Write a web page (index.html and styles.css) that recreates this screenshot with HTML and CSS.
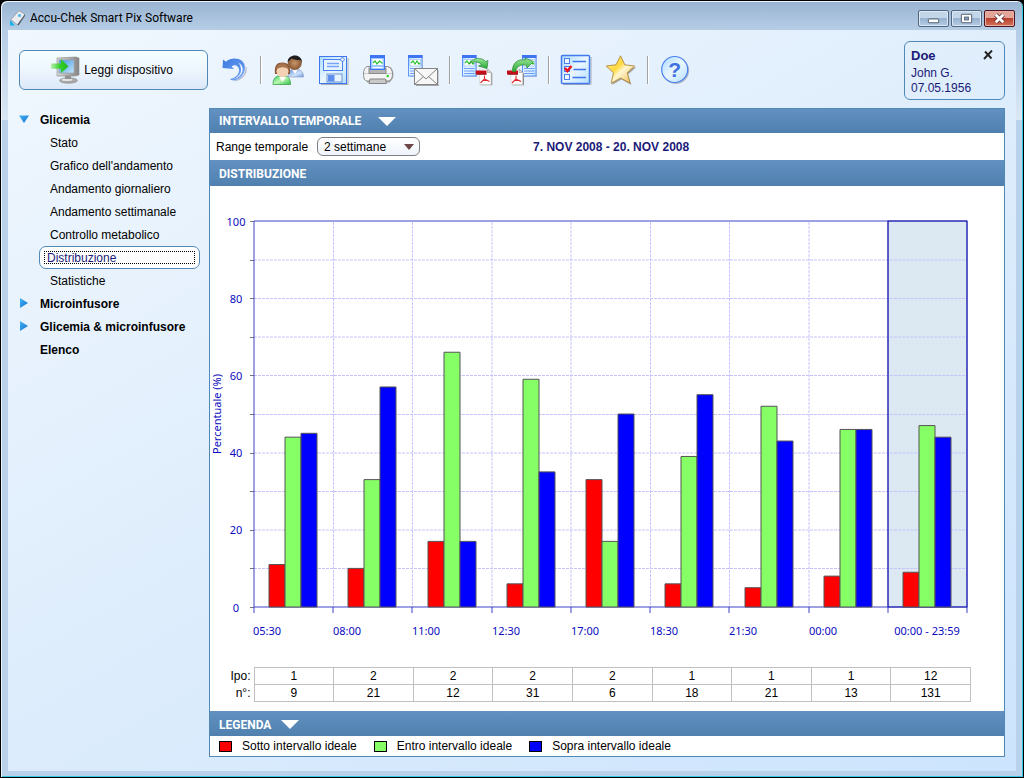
FILE: index.html
```html
<!DOCTYPE html>
<html lang="it">
<head>
<meta charset="utf-8">
<meta name="viewport" content="width=device-width, initial-scale=1">
<title>Accu-Chek Smart Pix Software</title>
<link rel="stylesheet" href="styles.css">
</head>
<body>
<svg class="defs" aria-hidden="true">
  <defs>
    <linearGradient id="paper" x1="0" y1="0" x2="1" y2="1"><stop offset="0" stop-color="#a8dcff"/><stop offset=".5" stop-color="#eaf6ff"/><stop offset="1" stop-color="#b4e0ff"/></linearGradient>
    <linearGradient id="gold" x1="0" y1="0" x2="1" y2="1"><stop offset="0" stop-color="#fff3b0"/><stop offset=".4" stop-color="#ffd93a"/><stop offset=".55" stop-color="#fff6d0"/><stop offset="1" stop-color="#f0b84a"/></linearGradient>
    <linearGradient id="leaf" x1="0" y1="0" x2="0" y2="1"><stop offset="0" stop-color="#9be69b"/><stop offset="1" stop-color="#27a82f"/></linearGradient>
    <linearGradient id="swirl" x1="0" y1="0" x2="1" y2="1"><stop offset="0" stop-color="#3f7be0"/><stop offset=".6" stop-color="#5b92ee"/><stop offset="1" stop-color="#8fb4f6"/></linearGradient>
    <linearGradient id="steel" x1="0" y1="0" x2="1" y2="0"><stop offset="0" stop-color="#d8d8d8"/><stop offset="1" stop-color="#858585"/></linearGradient>
    <linearGradient id="screen" x1="0" y1="0" x2="1" y2="1"><stop offset="0" stop-color="#3f96e0"/><stop offset="1" stop-color="#c4e6ff"/></linearGradient>
    <linearGradient id="go" x1="0" y1="0" x2="1" y2="0"><stop offset="0" stop-color="#b8f0b0"/><stop offset=".5" stop-color="#35d02c"/><stop offset="1" stop-color="#20b81c"/></linearGradient>
    <linearGradient id="green-coat" x1="0" y1="0" x2="1" y2="1"><stop offset="0" stop-color="#3ec95a"/><stop offset=".5" stop-color="#b8f8b0"/><stop offset="1" stop-color="#34c04a"/></linearGradient>
    <linearGradient id="blue-coat" x1="0" y1="0" x2="1" y2="1"><stop offset="0" stop-color="#5c8cd8"/><stop offset=".6" stop-color="#cfe2fb"/><stop offset="1" stop-color="#6b98de"/></linearGradient>
    <radialGradient id="dark-skin"><stop offset="0" stop-color="#c79468"/><stop offset="1" stop-color="#8a5a36"/></radialGradient>
    <linearGradient id="arrow-blue" x1="0" y1="0" x2="1" y2="1"><stop offset="0" stop-color="#45b4f4"/><stop offset="1" stop-color="#0f6fd0"/></linearGradient>
    <symbol id="report" viewBox="0 0 15 22">
      <path d="M15 2v20H2" fill="none" stroke="#a9adb5"/>
      <rect x=".5" y=".5" width="13.5" height="20.5" fill="url(#paper)" stroke="#5d92fb"/>
      <rect width="14.500" height="3" fill="#3e74f4"/>
      <rect x="2" y="4.500" width="10.500" height="6.500" fill="#fff" stroke="#8fb6f2" stroke-width=".6"/>
      <path d="M3 8l2-2 2 3 2-3 2 3 1-1" fill="none" stroke="#28c02c" stroke-width="1.200"/>
      <path d="M2 13.500h10.500M2 16h10.500M2 18.500h10.500" stroke="#6f9cf8"/>
    </symbol>
    <symbol id="pdf" viewBox="0 0 17 17">
      <path d="M5 1h8l4 4v12H5z" fill="#8d8d8d"/>
      <path d="M4 .5h8l3.500 3.500v12H4z" fill="#fff" stroke="#d4d4d4" stroke-width=".7"/>
      <path d="M12 .5v3.500h3.500z" fill="#ddd" stroke="#999" stroke-width=".6"/>
      <rect y="2" width="11" height="4" fill="#c4101a"/><path d="M1 5.700h10" stroke="#8d0a10" stroke-width=".8"/>
      <path d="M9 7v3.500l-4 4M9 10.500l5 2.500M7 12h5" fill="none" stroke="#e02830" stroke-width="1.100"/>
    </symbol>
  </defs>
</svg>

<div class="window">
  <header class="titlebar">
    <svg class="app-icon" viewBox="0 0 16 16" aria-hidden="true"><path d="M1 9.500L9 .7l6 3.600-7.500 10.500z" fill="#e8ecef" stroke="#8a939b" stroke-width=".7"/><path d="M7.500 14.800L15 4.300v1.500L8.500 15.500z" fill="#4b5258"/><circle cx="9.500" cy="5.500" r="1.500" fill="#49b4ee"/><path d="M0 10v5.500h5z" fill="#18b0e8"/><path d="M3 9l3.500 3" stroke="#fff"/></svg>
    <h1 class="title">Accu-Chek Smart Pix Software</h1>
    <div class="window-buttons">
      <button class="wbtn" type="button" aria-label="Riduci a icona"><svg viewBox="0 0 30 16"><rect x="9.500" y="8.500" width="11" height="4" rx=".5" fill="#fff" stroke="#4c5a6c"/></svg></button>
      <button class="wbtn" type="button" aria-label="Ingrandisci"><svg viewBox="0 0 30 16"><rect x="9.500" y="3.500" width="11" height="9" rx=".5" fill="#fff" stroke="#4c5a6c"/><rect x="13" y="6.500" width="4" height="3" fill="#8fa9c6" stroke="#4c5a6c"/></svg></button>
      <button class="wbtn wbtn-close" type="button" aria-label="Chiudi"><svg viewBox="0 0 30 16"><path d="M11 4l8 8M19 4l-8 8" stroke="#5a3438" stroke-width="4.800"/><path d="M11 4l8 8M19 4l-8 8" stroke="#fff" stroke-width="3"/></svg></button>
    </div>
  </header>

  <div class="content">
    <div class="toolbar">
      <button class="read" type="button">
        <svg class="read-icon" viewBox="0 0 30 28" aria-hidden="true">
          <ellipse cx="18.500" cy="24.500" rx="9" ry="2.800" fill="#a8a8a8" stroke="#8a8a8a" stroke-width=".6"/><ellipse cx="17" cy="23.700" rx="5.500" ry="1.300" fill="#e4e4e4"/>
          <path d="M15 18h6v5h-6z" fill="#929292"/>
          <path d="M7 2l19-1 3 1v17l-4 1H7z" fill="url(#steel)" stroke="#8a8a8a" stroke-width=".6"/>
          <path d="M9 4h15v13H9z" fill="url(#screen)" stroke="#9ba5ad" stroke-width=".7"/>
          <path d="M1 7.500h10V3l7.500 7.500L11 17v-4.200H1z" fill="url(#go)"/>
        </svg>
        <span>Leggi dispositivo</span>
      </button>
      <div class="tools">
        <button class="tool" type="button" aria-label="Indietro"><svg viewBox="0 0 32 32"><path d="M17 27c8-2 12-8 11-14" fill="none" stroke="#b4b8c4" stroke-width="1.200"/><path d="M5 5.500l3 2.300C14 2 27.300 4 27 14c-.3 7-6 12.500-11.500 12.500-2 0-3-.8-3.500-1.500 6-1 9.500-5.500 9-9.500-.5-3.800-4-5.500-7.500-3l2.500 2.500L4.500 14z" fill="url(#swirl)"/><path d="M20.500 8.500c4.500 3 5 7 3 11-2 3.500-5.500 5.500-9 6 6-2 9-6 8.500-10.500-.2-2.500-1.200-4.500-2.500-6.500z" fill="#f4f8ff"/></svg></button>
      </div>
      <span class="sep"></span>
      <div class="tools">
        <button class="tool" type="button" aria-label="Pazienti"><svg viewBox="0 0 32 32"><path d="M16 23c0-6 3-8 7.500-8s8 2 8 8z" fill="url(#blue-coat)" stroke="#8a9cb8" stroke-width=".6"/><path d="M20 15l3 5 3-5z" fill="#fff"/><circle cx="22.700" cy="9" r="6.700" fill="url(#dark-skin)" stroke="#6f4526" stroke-width=".5"/><path d="M15.800 8C15 0 30.500-1.500 30 9l-1.500-3c-4 .5-7-1-9-1.500z" fill="#221e1e"/><path d="M1 30.500c0-7 3.500-9 9-9s8.500 2 8.500 9z" fill="url(#green-coat)" stroke="#2b9a3c" stroke-width=".7"/><path d="M3 20C2 11 5 8.500 10.500 8.500S19 12 18 20z" fill="#8a5635"/><ellipse cx="10.500" cy="17.300" rx="6" ry="6" fill="#f3d2b4"/><path d="M4 16c0-9 12.500-9 13 0-2-3-9-4.500-13 0z" fill="#a8744d"/><path d="M7 23l3.500 5 3.500-5z" fill="#fff"/></svg></button>
        <button class="tool" type="button" aria-label="Salva"><svg viewBox="0 0 32 32"><path d="M4 30.500h27V4" fill="none" stroke="#a9adb5"/><rect x="2.500" y="2.500" width="27" height="27" fill="url(#paper)" stroke="#3f76ee"/><rect x="6.500" y="5.500" width="19" height="11" fill="#e6f4ff" stroke="#4a80f0"/><path d="M10 9.500h12M10 12.500h12" stroke="#7aa2f8" stroke-width="1.500"/><circle cx="25.500" cy="5.500" r="1.800" fill="#fff" stroke="#4a80f0"/><rect x="10" y="20" width="15" height="8" fill="#e8f4ff" stroke="#6c94d0"/><rect x="11" y="21" width="6.500" height="6.500" fill="#5f90f0"/></svg></button>
        <button class="tool" type="button" aria-label="Stampa"><svg viewBox="0 0 32 32"><path d="M5 12.500h22c3 1 4.500 4 4.500 8 0 3-1 5.500-4 8H5z" fill="#aaa"/><path d="M5 12.500h20.500c3.500 1 5 4 5 7.500s-1.500 7-4.500 7H5c-2.500 0-3.500-3-3.500-7S3 13.500 5 12.500z" fill="#f4f4f4" stroke="#8c8c8c"/><path d="M2 19.500h28" stroke="#cfcfcf"/><rect x="7" y="14" width="17" height="5.500" fill="#b4b4b4" stroke="#8c8c8c"/><rect x="8.500" y="1.500" width="14" height="14" fill="#9cc8ff" stroke="#3e74f4"/><path d="M8 2.500h15" stroke="#3e74f4" stroke-width="3"/><rect x="10.500" y="5" width="10" height="6" fill="#fff"/><path d="M11 9l2-2 2 3 2.500-3 3 2.500" fill="none" stroke="#28c02c" stroke-width="1.200"/><path d="M10.500 13.500h10" stroke="#fff"/><path d="M8 25h15.500l1 4.500H7z" fill="#c9c9c9" stroke="#858585"/><circle cx="25.700" cy="22" r="1.300" fill="#2ed42e"/></svg></button>
        <button class="tool" type="button" aria-label="Invia e-mail"><svg viewBox="0 0 32 32"><use href="#report" x="1" y="1" width="15" height="22"/><path d="M9 31.500h23V16" fill="none" stroke="#a8a8a8"/><rect x="7.500" y="14.500" width="23" height="16" fill="#f7f7f7" stroke="#858585"/><path d="M7.500 30.500l9-8M30.500 30.500l-9-8M7.500 14.500L19 25l11.500-10.500" fill="none" stroke="#858585"/></svg></button>
      </div>
      <span class="sep"></span>
      <div class="tools">
        <button class="tool" type="button" aria-label="Esporta in PDF"><svg viewBox="0 0 32 32"><use href="#report" x="1" y="1" width="15" height="22"/><use href="#pdf" x="14.500" y="14.500" width="17" height="17"/><path d="M8 10c4-7 13-7 16.500-2.500l2.500-1-1 8-8.500-2.500 3-1.500C18 7.500 12 7 8 10z" fill="url(#leaf)" stroke="#2c8a34" stroke-width=".7"/></svg></button>
        <button class="tool" type="button" aria-label="Mostra PDF"><svg viewBox="0 0 32 32"><use href="#report" x="16" y="1" width="15" height="22"/><use href="#pdf" x="1" y="14.500" width="17" height="17"/><path d="M6.500 17.500C6 9 12 4.500 19.500 6l-.5-2 8.500 3.500-6.500 6.500-.7-3C14 10 10.500 13 9.500 17.500z" fill="url(#leaf)" stroke="#2c8a34" stroke-width=".7"/></svg></button>
      </div>
      <span class="sep"></span>
      <div class="tools">
        <button class="tool" type="button" aria-label="Impostazioni"><svg viewBox="0 0 32 32"><path d="M3 30.500h28V3" fill="none" stroke="#a9adb5"/><rect x="1.500" y="1.500" width="28" height="28" rx="1" fill="url(#paper)" stroke="#4479ee" stroke-width="1.500"/><g fill="#eef7ff" stroke="#4a7df0"><rect x="4.500" y="4.500" width="5" height="5"/><rect x="4.500" y="12.500" width="5" height="5"/><rect x="4.500" y="20.500" width="5" height="5"/></g><path d="M12.500 7.500H26M13.500 15.500H26M12.500 23.500H26" stroke="#3f74ee" stroke-width="1.400"/><path d="M5 14l2.300 3L11.500 12" fill="none" stroke="#f01018" stroke-width="2.400"/></svg></button>
        <button class="tool" type="button" aria-label="Preferiti"><svg viewBox="0 0 32 32"><path d="M16.500 3l4 9.500 10.500 1-8 7 3.500 10.500-10-5.500-9.500 5.500z" fill="#a8a39a"/><path d="M15.500 1.800l4.300 9 9.800 1.200-7.300 6.700 2.700 10.300-9.500-5-9.300 5.300 2.300-10.600L1.200 12l9.800-1.200z" fill="url(#gold)" stroke="#b08a3c" stroke-width=".9"/></svg></button>
      </div>
      <span class="sep"></span>
      <div class="tools">
        <button class="tool" type="button" aria-label="Guida"><svg viewBox="0 0 32 32"><circle cx="16.700" cy="16.500" r="13.500" fill="#b4bac4"/><circle cx="15.700" cy="15.500" r="13" fill="url(#paper)" stroke="#4c80ee" stroke-width="1.200"/><text class="help-mark" x="15.700" y="23" text-anchor="middle">?</text></svg></button>
      </div>
      <section class="patient">
        <div>
          <h2 class="patient-name">Doe</h2>
          <p>John G.</p>
          <p>07.05.1956</p>
        </div>
        <button class="patient-close" type="button" aria-label="Chiudi paziente"><svg viewBox="0 0 10 10"><path d="M2 1.500l6.500 7M9 .5L1 9" stroke="#222" stroke-width="1.900"/></svg></button>
      </section>
    </div>

    <div class="columns">
      <nav class="nav" aria-label="Rapporti">
        <button class="group" type="button" aria-expanded="true"><svg class="twist" viewBox="0 0 10 10"><path d="M0 1.500h10L5 9z" fill="url(#arrow-blue)"/></svg>Glicemia</button>
        <ul class="items">
          <li><a href="#stato">Stato</a></li>
          <li><a href="#grafico">Grafico dell'andamento</a></li>
          <li><a href="#giornaliero">Andamento giornaliero</a></li>
          <li><a href="#settimanale">Andamento settimanale</a></li>
          <li><a href="#controllo">Controllo metabolico</a></li>
          <li><a class="current" href="#distribuzione" aria-current="page"><span>Distribuzione</span></a></li>
          <li><a href="#statistiche">Statistiche</a></li>
        </ul>
        <button class="group" type="button" aria-expanded="false"><svg class="twist" viewBox="0 0 10 10"><path d="M1 0v10l8-5z" fill="url(#arrow-blue)"/></svg>Microinfusore</button>
        <button class="group" type="button" aria-expanded="false"><svg class="twist" viewBox="0 0 10 10"><path d="M1 0v10l8-5z" fill="url(#arrow-blue)"/></svg>Glicemia &amp; microinfusore</button>
        <a class="group group-leaf" href="#elenco">Elenco</a>
      </nav>

      <main class="panel">
        <h2 class="bar bar-top">INTERVALLO TEMPORALE <svg class="fold" viewBox="0 0 18 9" aria-hidden="true"><path d="M0 0h18L9 9z" fill="#fff"/></svg></h2>
        <div class="range">
          <label for="range">Range temporale</label>
          <div class="select">
            <select id="range"><option>2 settimane</option></select>
            <svg class="select-arrow" viewBox="0 0 10 6" aria-hidden="true"><path d="M0 0h10L5 6z" fill="#6b4747"/></svg>
          </div>
          <strong class="dates">7. NOV 2008 - 20. NOV 2008</strong>
        </div>
        <h2 class="bar bar-mid" id="distribuzione">DISTRIBUZIONE</h2>
        <svg class="chart" viewBox="0 0 794 481" role="img" aria-label="Distribuzione percentuale per fascia oraria">
          <rect x="678" y="35" width="79" height="386" fill="#dde9f2"/>
          <path class="grid" d="M44 74h713M44 112.500h713M44 151h713M44 189.500h713M44 228.500h713M44 267h713M44 305.500h713M44 344h713M44 382.500h713M123.500 36v385M202.500 36v385M282 36v385M361 36v385M440.500 36v385M519.500 36v385M599 36v385"/>
          <path class="tick" d="M40 35.500h4M40 74.500h4M40 112.500h4M40 151.500h4M40 189.500h4M40 228.500h4M40 267.500h4M40 305.500h4M40 344.500h4M40 382.500h4M40 421.500h4"/>
          <path class="axis" d="M44 427V35h713v392M44 421h713M678 35v392M123 421v6M202 421v6M282 421v6M361 421v6M440 421v6M519 421v6M599 421v6"/>
          <rect class="total" x="678" y="35" width="79" height="386"/>
          <g class="bars">
            <g transform="translate(59 421) scale(1 -3.86)"><rect class="low" width="16" height="11"/><rect class="mid" x="16" width="16" height="44"/><rect class="high" x="32" width="16" height="45"/></g>
            <g transform="translate(138 421) scale(1 -3.86)"><rect class="low" width="16" height="10"/><rect class="mid" x="16" width="16" height="33"/><rect class="high" x="32" width="16" height="57"/></g>
            <g transform="translate(218 421) scale(1 -3.86)"><rect class="low" width="16" height="17"/><rect class="mid" x="16" width="16" height="66"/><rect class="high" x="32" width="16" height="17"/></g>
            <g transform="translate(297 421) scale(1 -3.86)"><rect class="low" width="16" height="6"/><rect class="mid" x="16" width="16" height="59"/><rect class="high" x="32" width="16" height="35"/></g>
            <g transform="translate(376 421) scale(1 -3.86)"><rect class="low" width="16" height="33"/><rect class="mid" x="16" width="16" height="17"/><rect class="high" x="32" width="16" height="50"/></g>
            <g transform="translate(455 421) scale(1 -3.86)"><rect class="low" width="16" height="6"/><rect class="mid" x="16" width="16" height="39"/><rect class="high" x="32" width="16" height="55"/></g>
            <g transform="translate(535 421) scale(1 -3.86)"><rect class="low" width="16" height="5"/><rect class="mid" x="16" width="16" height="52"/><rect class="high" x="32" width="16" height="43"/></g>
            <g transform="translate(614 421) scale(1 -3.86)"><rect class="low" width="16" height="8"/><rect class="mid" x="16" width="16" height="46"/><rect class="high" x="32" width="16" height="46"/></g>
            <g transform="translate(693 421) scale(1 -3.86)"><rect class="low" width="16" height="9"/><rect class="mid" x="16" width="16" height="47"/><rect class="high" x="32" width="16" height="44"/></g>
          </g>
          <g class="labels" text-anchor="middle">
            <text x="26" y="40">100</text><text x="26" y="117">80</text><text x="26" y="194">60</text><text x="26" y="271">40</text><text x="26" y="348">20</text><text x="26" y="426">0</text>
            <text transform="translate(11 228) rotate(-90)">Percentuale (%)</text>
            <text x="717" y="449">00:00 - 23:59</text>
          </g>
          <g class="labels">
            <text x="43" y="449">05:30</text><text x="123" y="449">08:00</text><text x="202" y="449">11:00</text><text x="282" y="449">12:30</text><text x="361" y="449">17:00</text><text x="440" y="449">18:30</text><text x="519" y="449">21:30</text><text x="599" y="449">00:00</text>
          </g>
        </svg>
        <table class="counts">
          <tr><th scope="row">Ipo:</th><td>1</td><td>2</td><td>2</td><td>2</td><td>2</td><td>1</td><td>1</td><td>1</td><td>12</td></tr>
          <tr><th scope="row">n°:</th><td>9</td><td>21</td><td>12</td><td>31</td><td>6</td><td>18</td><td>21</td><td>13</td><td>131</td></tr>
        </table>
        <h2 class="bar bar-legend">LEGENDA <svg class="fold" viewBox="0 0 18 9" aria-hidden="true"><path d="M0 0h18L9 9z" fill="#fff"/></svg></h2>
        <ul class="legend">
          <li><i class="swatch swatch-low"></i>Sotto intervallo ideale</li>
          <li><i class="swatch swatch-mid"></i>Entro intervallo ideale</li>
          <li><i class="swatch swatch-high"></i>Sopra intervallo ideale</li>
        </ul>
      </main>
    </div>
  </div>
</div>
</body>
</html>
```
FILE: styles.css
```css
* { box-sizing: border-box; }
html { background: #000; }
body {
  margin: 0;
  font: 12px/15px "Liberation Sans", Arial, sans-serif;
  color: #000;
}
h1, h2, p, ul { margin: 0; padding: 0; font-size: 12px; font-weight: normal; }
ul { list-style: none; }
button { font: inherit; color: inherit; background: none; border: 0; padding: 0; }
a { color: inherit; text-decoration: none; }
svg { display: block; }
.defs { position: absolute; width: 0; height: 0; }

.window {
  display: flex;
  flex-direction: column;
  min-height: 100vh;
  padding: 0 6px 6px;
  border: 1px solid #000;
  border-radius: 7px 7px 0 0;
  box-shadow: inset 1px 1px #eef5fc, inset -1px -1px #35c8e0;
  background: linear-gradient(#98b3d1, #b5cce5 28px, #dbe7f4 119px, #b9d1ea 119px);
}
.titlebar { display: flex; align-items: center; height: 29px; padding: 5px 2px 0 3px; }
.app-icon { width: 16px; height: 16px; margin-right: 4px; }
.title { flex: 1; font: 12px/16px Roboto, "Open Sans", sans-serif; }
.window-buttons { display: flex; gap: 2px; }
.wbtn {
  width: 31px;
  height: 17px;
  border: 1px solid #52657e;
  border-radius: 2px;
  box-shadow: inset 0 0 0 1px #dbe8f5;
  background: linear-gradient(#c3d5e8 45%, #98b2cf 50%, #b6cde5);
}
.wbtn svg { width: 100%; height: 100%; }
.wbtn-close {
  border-color: #4b1420;
  box-shadow: inset 0 0 0 1px #e8b0a4;
  background: linear-gradient(#e2a598 45%, #b8402e 50%, #d4745a);
}

.content {
  flex: 1;
  margin: 0 1px;
  padding: 0 11px 13px;
  background: linear-gradient(150deg, #f0f7fe, #dcecfc 55%, #cce4fd);
}
.toolbar { display: flex; align-items: center; gap: 10px; height: 78px; padding-top: 2px; }
.read {
  display: flex;
  align-items: center;
  justify-content: center;
  gap: 4px;
  width: 189px;
  height: 40px;
  padding-right: 4px;
  border: 1px solid #5088b8;
  border-radius: 6px;
  background: linear-gradient(#f4fefe, #eef6fe 50%, #dce8f8);
}
.read-icon { width: 30px; height: 28px; }
.tools { display: flex; gap: 13px; }
.tool { width: 32px; height: 32px; }
.tool svg { width: 32px; height: 32px; }
.help-mark { font: bold 21px "Liberation Sans", Arial, sans-serif; fill: #3f72e0; }
.sep { width: 2px; height: 28px; border-left: 1px solid #a2a2a2; background: #fff; }
.patient {
  display: flex;
  justify-content: space-between;
  align-items: flex-start;
  width: 101px;
  height: 59px;
  margin-left: auto;
  padding: 5px 11px 4px 6px;
  border: 1px solid #5088b8;
  border-radius: 6px;
  color: #1a1a78;
  line-height: 15px;
}
.patient-name { margin-bottom: 2px; font-size: 13px; font-weight: bold; line-height: 17px; }
.patient-close { margin-top: 3px; }
.patient-close svg { width: 10px; height: 10px; }

.columns { display: grid; grid-template-columns: 190px minmax(0, 1fr); }
.nav { line-height: 23px; }
.group { display: flex; align-items: center; gap: 11px; height: 23px; padding-top: 2px; font-weight: bold; }
.group-leaf { padding-left: 21px; }
.twist { align-self: flex-start; width: 10px; height: 10px; margin-top: 4px; }
.items a { display: block; height: 23px; padding-left: 31px; line-height: 25px; }
.items a.current {
  margin: 0 9px 0 20px;
  padding: 4px;
  border: 1px solid #5088b8;
  border-radius: 7px;
  background: #fff;
  color: #1a1a78;
}
.items .current span { display: block; height: 13px; padding-left: 2px; border: 1px dotted #000; line-height: 13px; }

.panel { border: 1px solid #5088b8; background: #fff; }
.bar {
  display: flex;
  align-items: center;
  gap: 17px;
  height: 25px;
  padding: 2px 0 0 9px;
  background: linear-gradient(#6391c1, #4f80ae);
  color: #fff;
  font: 700 12px/16px Roboto, "Liberation Sans", sans-serif;
}
.bar-top { height: 24px; padding-top: 0; }
.bar-mid { height: 26px; }
.bar-legend { gap: 10px; }
.fold { width: 18px; height: 9px; }
.range { display: flex; align-items: center; gap: 9px; height: 27px; padding-left: 6px; }
.range label, .dates { padding-top: 2px; }
.select { position: relative; width: 103px; height: 19px; }
.select select {
  width: 100%;
  height: 100%;
  padding: 1px 6px 0;
  appearance: none;
  border: 1px solid #808080;
  border-radius: 6px;
  background: linear-gradient(#fff, #eef4fb);
  font: inherit;
  color: #000;
}
.select-arrow { position: absolute; right: 6px; top: 7px; width: 10px; height: 6px; pointer-events: none; }
.dates { margin-left: 104px; color: #1a1a78; }

.chart { width: 100%; height: auto; }
.grid { fill: none; stroke: #c4c4fa; stroke-dasharray: 3 1; }
.tick { fill: none; stroke: #777; }
.axis { fill: none; stroke: #4040c8; }
.total { fill: none; stroke: #1c1cac; }
.bars rect { stroke: #555; vector-effect: non-scaling-stroke; }
.low { fill: #f00; }
.mid { fill: #86ff66; }
.high { fill: #00f; }
.labels { font: 11px "Noto Sans", "Open Sans", sans-serif; fill: #0a0ac0; }

.counts {
  width: calc(100% - 33px);
  margin-bottom: 9px;
  table-layout: fixed;
  border-collapse: collapse;
}
.counts th { width: 44px; padding: 0 3px 0 0; text-align: right; font-weight: normal; line-height: 16px; }
.counts td { padding: 0; border: 1px solid #bfbfbf; text-align: center; line-height: 16px; }

.legend { display: flex; gap: 17px; height: 20px; padding-left: 9px; align-items: center; }
.legend li { display: flex; align-items: center; gap: 10px; }
.swatch { width: 13px; height: 11px; border: 1px solid #000; }
.swatch-low { background: #f00; }
.swatch-mid { background: #86ff66; }
.swatch-high { background: #00f; }
```
